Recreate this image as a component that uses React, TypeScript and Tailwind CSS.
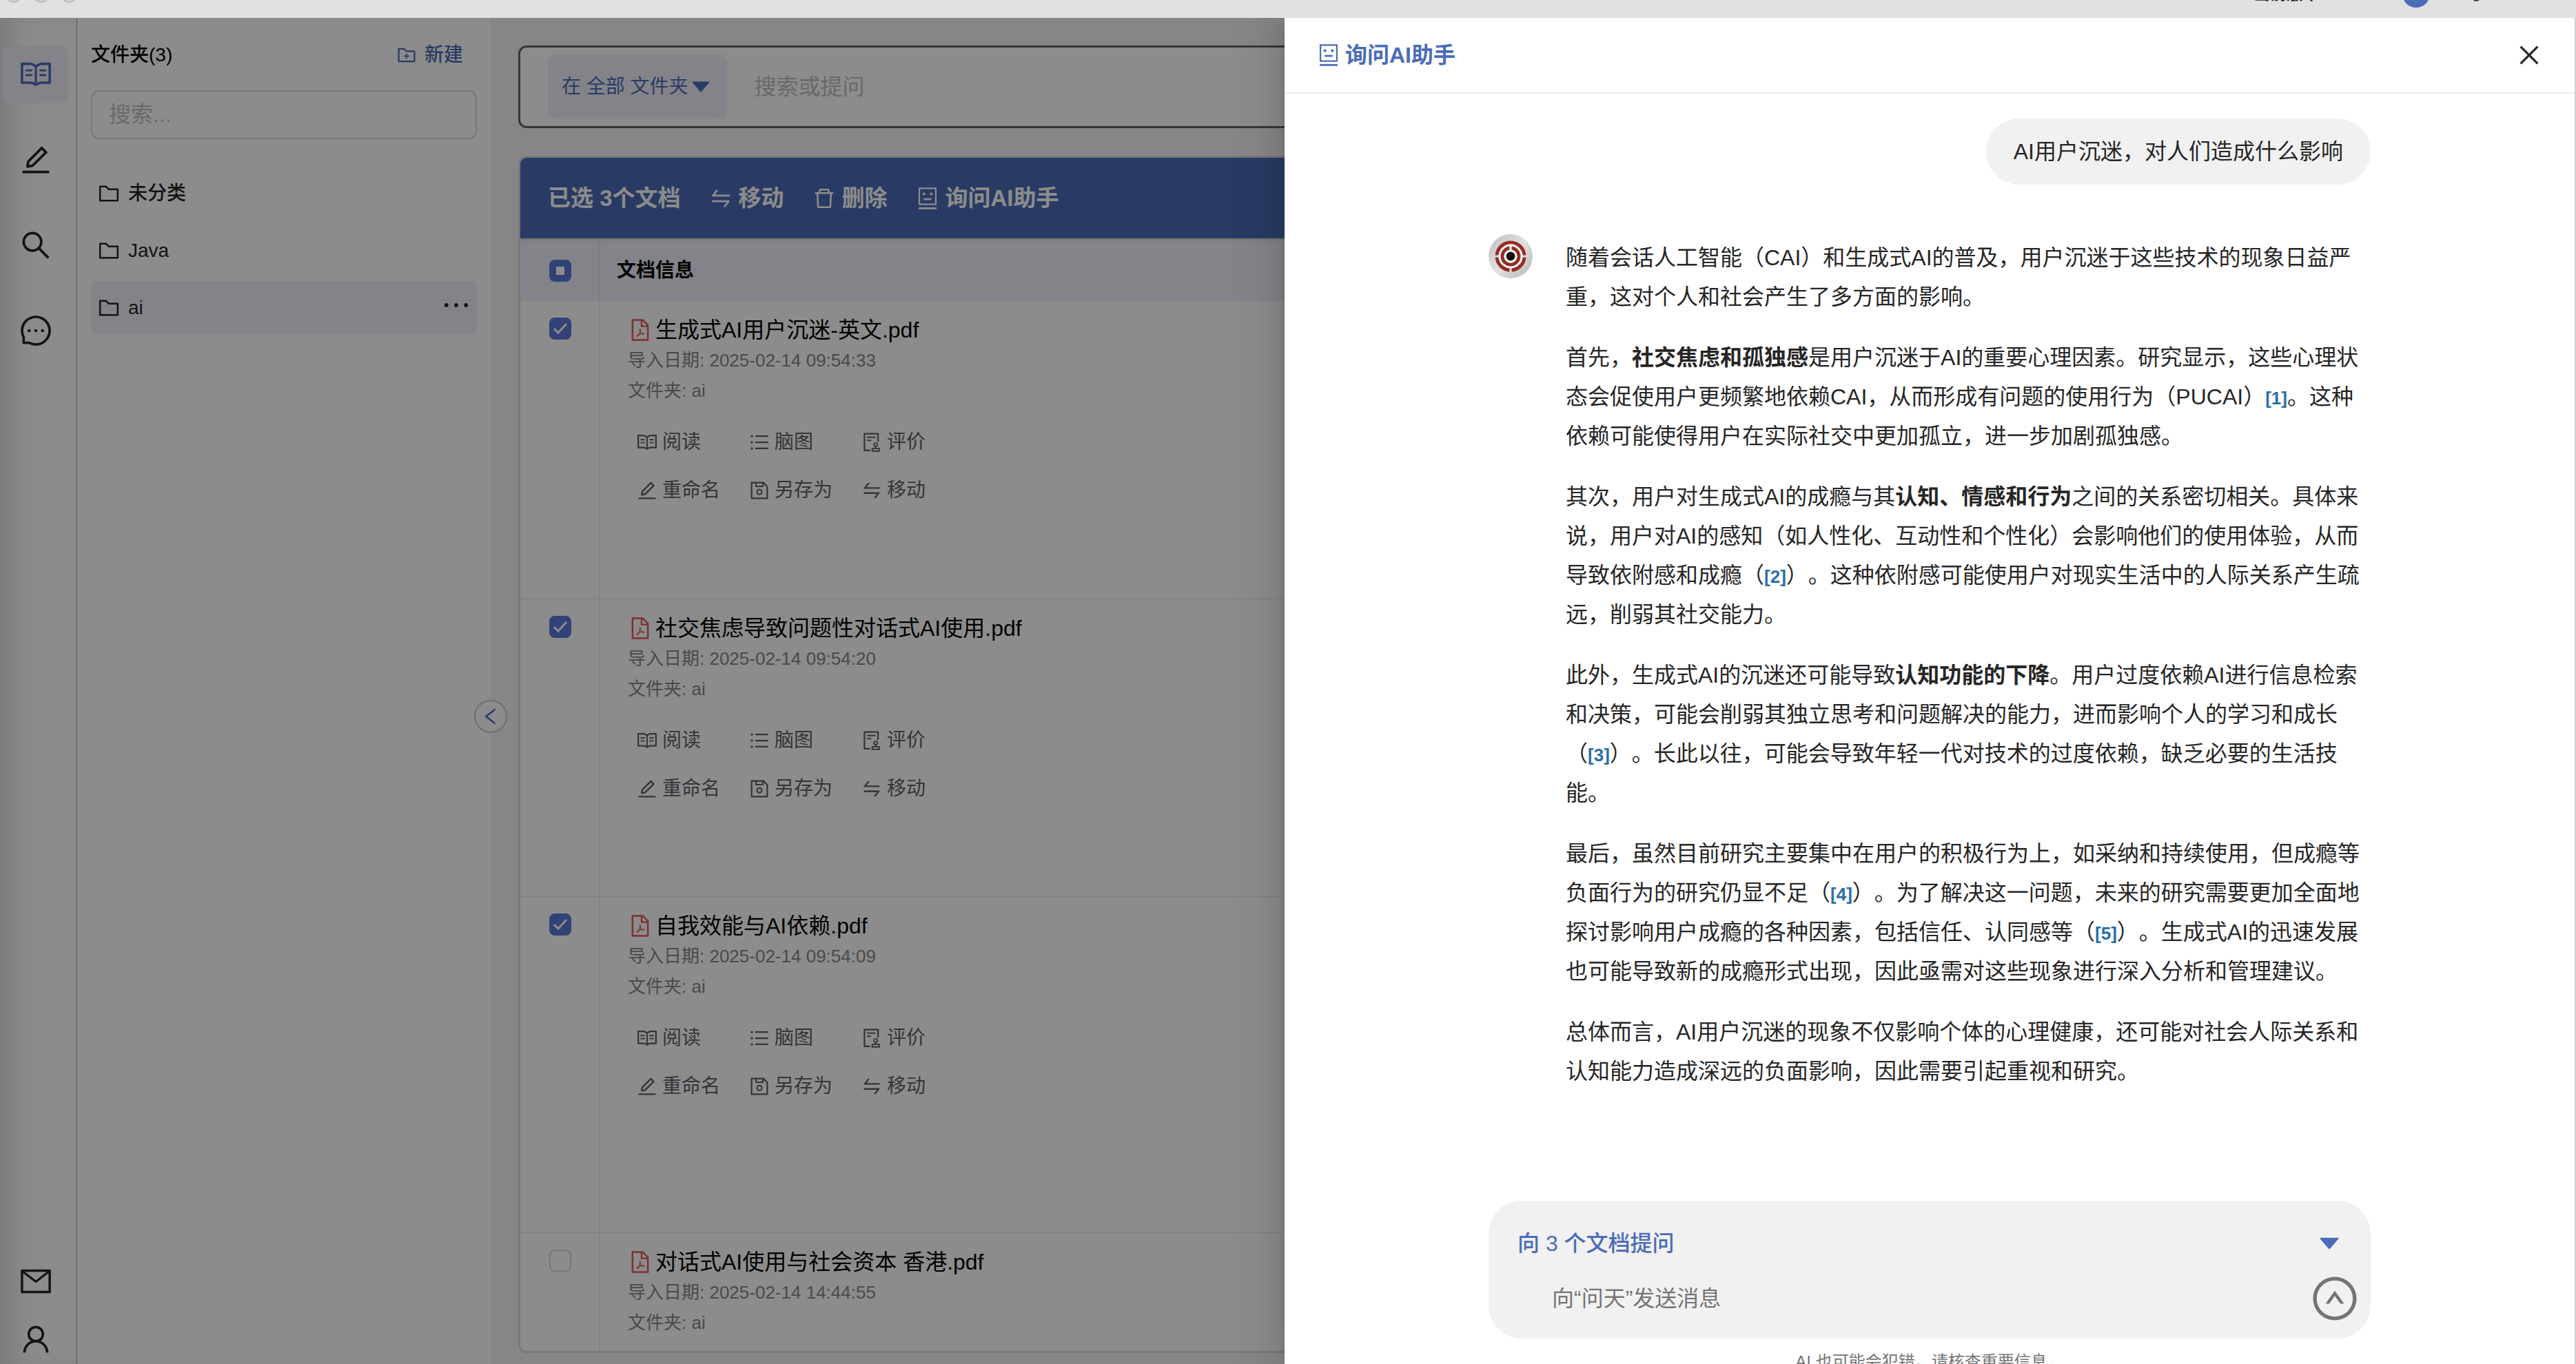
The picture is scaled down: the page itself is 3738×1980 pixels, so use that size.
import {
  AiFillCaretDown,
  AiOutlineAudit,
  AiOutlineClose,
  AiOutlineDelete,
  AiOutlineEdit,
  AiOutlineEllipsis,
  AiOutlineFilePdf,
  AiOutlineFolder,
  AiOutlineFolderAdd,
  AiOutlineLeft,
  AiOutlineMail,
  AiOutlineMessage,
  AiOutlineRead,
  AiOutlineRobot,
  AiOutlineSave,
  AiOutlineSearch,
  AiOutlineSwap,
  AiOutlineUnorderedList,
  AiOutlineUpCircle,
  AiOutlineUser,
} from 'react-icons/ai';
import type { ReactNode } from 'react';

const folders = [
  { name: '未分类', active: false },
  { name: 'Java', active: false },
  { name: 'ai', active: true },
];

const documents = [
  {
    title: '生成式AI用户沉迷-英文.pdf',
    date: '2025-02-14 09:54:33',
    checked: true,
    height: 'h-[432px]',
  },
  {
    title: '社交焦虑导致问题性对话式AI使用.pdf',
    date: '2025-02-14 09:54:20',
    checked: true,
    height: 'h-[432px]',
  },
  {
    title: '自我效能与AI依赖.pdf',
    date: '2025-02-14 09:54:09',
    checked: true,
    height: 'h-[488px]',
  },
  {
    title: '对话式AI使用与社会资本 香港.pdf',
    date: '2025-02-14 14:44:55',
    checked: false,
    height: 'h-[432px]',
  },
];

const actions = [
  { label: '阅读', icon: AiOutlineRead },
  { label: '脑图', icon: AiOutlineUnorderedList },
  { label: '评价', icon: AiOutlineAudit },
  { label: '重命名', icon: AiOutlineEdit },
  { label: '另存为', icon: AiOutlineSave },
  { label: '移动', icon: AiOutlineSwap },
];

function TitleBar() {
  return (
    <header className="relative h-[26px] shrink-0 overflow-hidden bg-[#e1e1e1]">
      <div className="absolute -top-5 left-2 flex gap-4">
        <span className="size-6 rounded-full border-2 border-[#bdbdbd] bg-[#d2d2d2]" />
        <span className="size-6 rounded-full border-2 border-[#bdbdbd] bg-[#d2d2d2]" />
        <span className="size-6 rounded-full border-2 border-[#bdbdbd] bg-[#d2d2d2]" />
      </div>
      <div className="absolute -top-[29px] right-0 flex h-10 items-center text-2xl font-bold text-[#262626]">
        <span className="w-[216px]">当前版本 1.0.0</span>
        <span className="mr-10 size-10 rounded-full bg-[#4b6cb7]" />
        <span className="w-[172px]">1考 1.0.0</span>
      </div>
    </header>
  );
}

function NavButton({
  label,
  active = false,
  children,
}: {
  label: string;
  active?: boolean;
  children: ReactNode;
}) {
  return (
    <button
      aria-label={label}
      className={
        active
          ? 'flex h-[84px] items-center justify-center rounded-xl bg-[#eeeff9] text-[#4b6cb7]'
          : 'flex h-[84px] items-center justify-center rounded-xl text-[#262626]'
      }
    >
      {children}
    </button>
  );
}

function NavRail() {
  return (
    <nav className="flex w-28 shrink-0 flex-col justify-between border-r border-[#a0a0a0] bg-white pt-10 pr-3 pl-1 text-[50px] shadow-[inset_32px_0_40px_-16px_rgba(0,0,0,0.14)]">
      <div className="flex flex-col gap-10">
        <NavButton label="阅读" active>
          <AiOutlineRead />
        </NavButton>
        <NavButton label="写作">
          <AiOutlineEdit />
        </NavButton>
        <NavButton label="搜索">
          <AiOutlineSearch />
        </NavButton>
        <NavButton label="对话">
          <AiOutlineMessage />
        </NavButton>
      </div>
      <div className="-mb-1.5 flex flex-col">
        <NavButton label="邮件">
          <AiOutlineMail />
        </NavButton>
        <NavButton label="用户">
          <AiOutlineUser />
        </NavButton>
      </div>
    </nav>
  );
}

function FolderPanel() {
  return (
    <aside className="relative w-[600px] shrink-0 bg-white px-5 pt-8">
      <div className="flex h-11 items-center justify-between text-[28px] text-black">
        <h2 className="font-medium">文件夹(3)</h2>
        <button className="flex items-center gap-2.5 pr-5 font-medium text-[#4b6cb7]">
          <AiOutlineFolderAdd className="size-8" />
          新建
        </button>
      </div>
      <input
        aria-label="搜索文件夹"
        placeholder="搜索..."
        className="mt-[29px] h-[71px] w-full rounded-xl border-2 border-[#d9d9d9] px-6 text-[32px] outline-none placeholder:text-[#bfbfbf]"
      />
      <ul className="mt-10 flex flex-col gap-1.5 text-[28px] font-medium text-[#262626]">
        {folders.map((folder) => (
          <li
            key={folder.name}
            className={
              folder.active
                ? 'flex h-[77px] items-center rounded-lg bg-[#eeeff9] pr-1 pl-2'
                : 'flex h-[77px] items-center rounded-lg pr-1 pl-2'
            }
          >
            <button className="flex flex-1 items-center gap-2.5">
              <AiOutlineFolder className="size-9" />
              {folder.name}
            </button>
            {folder.active && (
              <button aria-label="更多" className="pb-2">
                <AiOutlineEllipsis className="size-[52px]" />
              </button>
            )}
          </li>
        ))}
      </ul>
      <button
        aria-label="收起"
        className="absolute top-[calc(50%+13px)] -right-6 z-10 flex size-12 items-center justify-center rounded-full border-2 border-[#c8c8c8] bg-white text-[#4b6cb7]"
      >
        <AiOutlineLeft className="size-8" />
      </button>
    </aside>
  );
}

function CheckBox({ label, checked }: { label: string; checked: boolean }) {
  return (
    <span className="relative block size-8">
      <input
        type="checkbox"
        aria-label={label}
        defaultChecked={checked}
        className="peer block size-8 appearance-none rounded-lg border-2 border-[#d9d9d9] bg-white checked:border-[#5a78d8] checked:bg-[#5a78d8]"
      />
      <svg
        viewBox="0 0 32 32"
        className="pointer-events-none absolute inset-0 hidden size-8 peer-checked:block"
      >
        <path d="M7 16l6 6L25 9" fill="none" stroke="#fff" strokeWidth="3" />
      </svg>
    </span>
  );
}

function DocumentTable() {
  return (
    <table className="w-full table-fixed border-collapse bg-white text-left">
      <thead>
        <tr className="h-[88px] bg-[#eeeff9]">
          <th className="w-[115px] border-r-2 border-[#e6e6e8] pl-[42px]">
            <span className="relative block size-8">
              <input
                type="checkbox"
                aria-label="全选"
                className="block size-8 appearance-none rounded-lg bg-[#5a78d8]"
              />
              <span className="pointer-events-none absolute inset-[10px] bg-white" />
            </span>
          </th>
          <th className="pl-6 text-[28px] font-bold text-black">文档信息</th>
        </tr>
      </thead>
      <tbody>
        {documents.map((doc) => (
          <tr key={doc.title} className={doc.height + ' border-b-2 border-[#eeeeee] align-top'}>
            <td className="border-r-2 border-[#eeeeee] pt-6 pl-[42px]">
              <CheckBox label={doc.title} checked={doc.checked} />
            </td>
            <td className="pt-5 pl-10">
              <div className="flex h-11 items-center gap-1 text-[32px] text-black">
                <AiOutlineFilePdf className="size-9 text-[#e35b57]" />
                {doc.title}
              </div>
              <div className="text-[26px] leading-11 text-[#888888]">
                <p>导入日期: {doc.date}</p>
                <p>文件夹: ai</p>
              </div>
              <div className="mt-[18px] grid w-[501px] grid-cols-3 pl-3 text-[28px] text-[#606266]">
                {actions.map(({ label, icon: Icon }) => (
                  <button key={label} className="flex h-[70px] items-center gap-1.5 whitespace-nowrap">
                    <Icon className="size-8" />
                    {label}
                  </button>
                ))}
              </div>
            </td>
          </tr>
        ))}
      </tbody>
    </table>
  );
}

function Library() {
  return (
    <main className="flex min-w-0 flex-1 flex-col bg-[#f5f5f5] px-10 pt-10 pb-4">
      <div className="flex h-[120px] shrink-0 items-center rounded-xl border-3 border-[#5c646b] bg-white pl-10">
        <button className="flex h-[94px] items-center rounded-xl bg-[#eeeff9] px-5 text-[28px] text-[#4b6cb7]">
          在 全部 文件夹
          <AiFillCaretDown className="size-9" />
        </button>
        <input
          aria-label="搜索或提问"
          placeholder="搜索或提问"
          className="flex-1 px-10 text-[32px] outline-none placeholder:text-[#bfbfbf]"
        />
      </div>
      <section className="mt-10 min-h-0 flex-1 overflow-hidden rounded-xl border-3 border-[#d9dadd]">
        <div className="flex h-[120px] items-center gap-10 border-b-3 border-[#d9dadd] bg-[#4b6cb7] pl-10 text-[33px] font-semibold text-white">
          <span>已选 3个文档</span>
          <button className="flex items-center gap-2">
            <AiOutlineSwap className="size-9" />
            移动
          </button>
          <button className="flex items-center gap-2">
            <AiOutlineDelete className="size-9" />
            删除
          </button>
          <button className="flex items-center gap-2">
            <AiOutlineRobot className="size-9" />
            询问AI助手
          </button>
        </div>
        <DocumentTable />
      </section>
    </main>
  );
}

function Avatar() {
  return (
    <svg viewBox="0 0 64 64" className="size-16 shrink-0" role="img" aria-label="问天">
      <defs>
        <linearGradient id="metal" x1="0" y1="0" x2="1" y2="1">
          <stop offset="0" stopColor="#bcbcbc" />
          <stop offset="0.5" stopColor="#e2e2e2" />
          <stop offset="1" stopColor="#b4b4b4" />
        </linearGradient>
      </defs>
      <circle cx="32" cy="32" r="32" fill="url(#metal)" />
      <circle cx="32" cy="32" r="20" fill="none" stroke="#962d25" strokeWidth="5" />
      <circle cx="32" cy="32" r="16" fill="none" stroke="#fff" strokeWidth="3" />
      <circle cx="32" cy="32" r="12" fill="none" stroke="#962d25" strokeWidth="5" />
      <circle cx="32" cy="32" r="8" fill="#111" stroke="#fff" strokeWidth="3" />
      <path d="M32 17v7" stroke="#fff" strokeWidth="3" />
      <path d="M32 49v6M9 32h6M49 32h6" stroke="#ddd" strokeWidth="3" />
    </svg>
  );
}

function Cite({ n }: { n: number }) {
  return (
    <a href={'#ref-' + n} className="text-[26px] leading-none font-bold text-[#2a6fa8]">
      [{n}]
    </a>
  );
}

function Answer() {
  return (
    <div className="flex min-w-0 flex-1 flex-col gap-[31px] pt-1.5 text-[32px] leading-[57px] [text-spacing-trim:space-all]">
      <p>
        随着会话人工智能（CAI）和生成式AI的普及，用户沉迷于这些技术的现象日益严重，这对个人和社会产生了多方面的影响。
      </p>
      <p>
        首先，<strong>社交焦虑和孤独感</strong>
        是用户沉迷于AI的重要心理因素。研究显示，这些心理状态会促使用户更频繁地依赖CAI，从而形成有问题的使用行为（PUCAI）
        <Cite n={1} />
        。这种依赖可能使得用户在实际社交中更加孤立，进一步加剧孤独感。
      </p>
      <p>
        其次，用户对生成式AI的成瘾与其<strong>认知、情感和行为</strong>
        之间的关系密切相关。具体来说，用户对AI的感知（如人性化、互动性和个性化）会影响他们的使用体验，从而导致依附感和成瘾（
        <Cite n={2} />
        ）。这种依附感可能使用户对现实生活中的人际关系产生疏远，削弱其社交能力。
      </p>
      <p>
        此外，生成式AI的沉迷还可能导致<strong>认知功能的下降</strong>
        。用户过度依赖AI进行信息检索和决策，可能会削弱其独立思考和问题解决的能力，进而影响个人的学习和成长（
        <Cite n={3} />
        ）。长此以往，可能会导致年轻一代对技术的过度依赖，缺乏必要的生活技能。
      </p>
      <p>
        最后，虽然目前研究主要集中在用户的积极行为上，如采纳和持续使用，但成瘾等负面行为的研究仍显不足（
        <Cite n={4} />
        ）。为了解决这一问题，未来的研究需要更加全面地探讨影响用户成瘾的各种因素，包括信任、认同感等（
        <Cite n={5} />
        ）。生成式AI的迅速发展也可能导致新的成瘾形式出现，因此亟需对这些现象进行深入分析和管理建议。
      </p>
      <p>
        总体而言，AI用户沉迷的现象不仅影响个体的心理健康，还可能对社会人际关系和认知能力造成深远的负面影响，因此需要引起重视和研究。
      </p>
    </div>
  );
}

function AssistantDrawer() {
  return (
    <section
      role="dialog"
      aria-label="询问AI助手"
      className="absolute inset-y-0 right-0 flex w-[calc(50%+5px)] flex-col border-r-2 border-[#cfcfcf] bg-white text-[#262626] shadow-[-12px_0_32px_0_rgba(0,0,0,0.08),-6px_0_12px_-8px_rgba(0,0,0,0.12),-18px_0_56px_16px_rgba(0,0,0,0.05)]"
    >
      <div className="flex h-[110px] shrink-0 items-center justify-between border-b-2 border-[#ececec] px-[46px]">
        <h1 className="flex items-center gap-1.5 text-[32px] font-semibold text-[#4b6cb7]">
          <AiOutlineRobot className="size-9" />
          询问AI助手
        </h1>
        <button aria-label="关闭">
          <AiOutlineClose className="size-10" />
        </button>
      </div>
      <div className="mx-auto flex min-h-0 w-[1280px] flex-1 flex-col">
        <p className="mt-9 self-end rounded-[48px] bg-[#f1f1f1] px-10 py-5 text-[32px] leading-14">
          AI用户沉迷，对人们造成什么影响
        </p>
        <div className="mt-[72px] flex min-h-0 flex-1 gap-12">
          <Avatar />
          <Answer />
        </div>
        <form className="flex h-[200px] shrink-0 flex-col gap-3.5 rounded-[48px] bg-[#f1f1f1] pt-8 pr-4 pl-[42px]">
          <div className="flex h-[60px] items-center justify-between pr-6 text-[32px] font-medium text-[#4b6cb7]">
            <span>向 3 个文档提问</span>
            <button type="button" aria-label="选择文档">
              <AiFillCaretDown className="size-10" />
            </button>
          </div>
          <div className="flex h-[72px] items-center">
            <input
              aria-label="发送消息"
              placeholder="向“问天”发送消息"
              className="flex-1 pl-[50px] text-[32px] outline-none placeholder:text-[#757575]"
            />
            <button type="button" aria-label="发送" className="text-[#757575]">
              <AiOutlineUpCircle className="size-[72px]" />
            </button>
          </div>
        </form>
        <p className="h-[37px] shrink-0 overflow-hidden pt-4 text-center text-2xl leading-9 text-[#757575]">
          AI 也可能会犯错，请核查重要信息。
        </p>
      </div>
    </section>
  );
}

export default function App() {
  return (
    <div className="flex h-screen flex-col overflow-hidden font-['Liberation_Sans','Noto_Sans_CJK_SC',sans-serif]">
      <TitleBar />
      <div className="relative flex min-h-0 flex-1 overflow-hidden">
        <NavRail />
        <FolderPanel />
        <Library />
        <div className="absolute inset-0 z-20 bg-black/45">
          <AssistantDrawer />
        </div>
      </div>
    </div>
  );
}
